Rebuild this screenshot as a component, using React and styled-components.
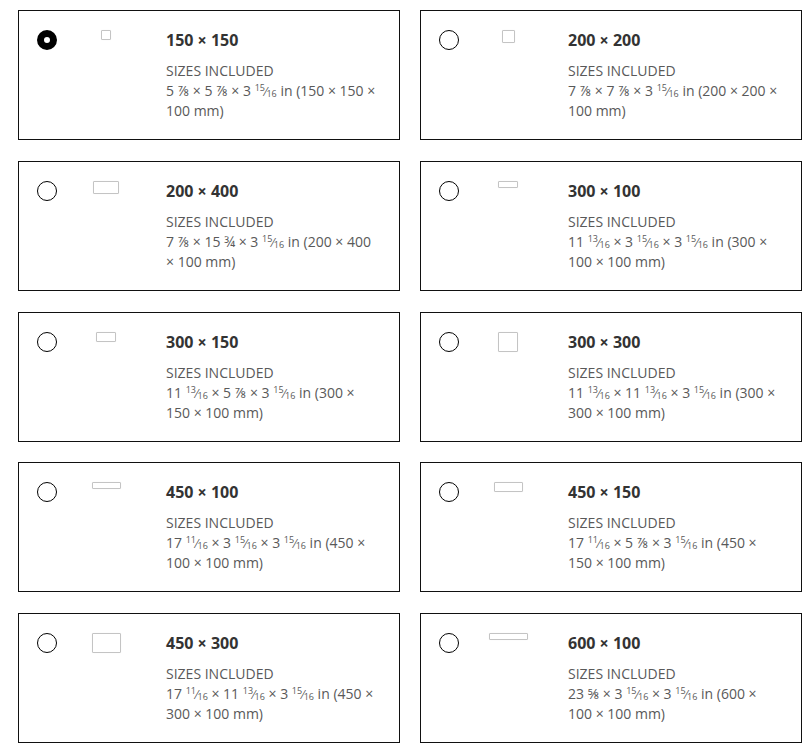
import React from 'react'
import styled, { createGlobalStyle } from 'styled-components'

const GlobalStyle = createGlobalStyle`
  body {
    margin: 0;
    background: #fff;
    font-family: "Open Sans", "Noto Sans", sans-serif;
  }
`

const sizes = [
  { w: 150, h: 150, inches: ['5', '7/8-', '5', '7/8-', '3', '15/16'], mm: '(150 × 150 × 100 mm)', selected: true },
  { w: 200, h: 200, inches: ['7', '7/8-', '7', '7/8-', '3', '15/16'], mm: '(200 × 200 × 100 mm)' },
  { w: 400, h: 200, title: '200 × 400', inches: ['7', '7/8-', '15', '3/4-', '3', '15/16'], mm: '(200 × 400 × 100 mm)' },
  { w: 300, h: 100, inches: ['11', '13/16', '3', '15/16', '3', '15/16'], mm: '(300 × 100 × 100 mm)' },
  { w: 300, h: 150, inches: ['11', '13/16', '5', '7/8-', '3', '15/16'], mm: '(300 × 150 × 100 mm)' },
  { w: 300, h: 300, inches: ['11', '13/16', '11', '13/16', '3', '15/16'], mm: '(300 × 300 × 100 mm)' },
  { w: 450, h: 100, inches: ['17', '11/16', '3', '15/16', '3', '15/16'], mm: '(450 × 100 × 100 mm)' },
  { w: 450, h: 150, inches: ['17', '11/16', '5', '7/8-', '3', '15/16'], mm: '(450 × 150 × 100 mm)' },
  { w: 450, h: 300, inches: ['17', '11/16', '11', '13/16', '3', '15/16'], mm: '(450 × 300 × 100 mm)' },
  { w: 600, h: 100, inches: ['23', '5/8-', '3', '15/16', '3', '15/16'], mm: '(600 × 100 × 100 mm)' },
]

const glyphs = { '7/8-': '⅞', '3/4-': '¾', '5/8-': '⅝' }

const Page = styled.div`
  display: grid;
  grid-template-columns: 382px 382px;
  column-gap: 20px;
  row-gap: 20.75px;
  padding: 10px 0 0 18px;
`

const Card = styled.label`
  display: flex;
  align-items: flex-start;
  border: 1px solid #111;
  padding: 19px 21px 18px 18px;
  height: 130px;
  box-sizing: border-box;
  cursor: pointer;
`

const Radio = styled.span`
  flex: none;
  width: 20px;
  height: 20px;
  border-radius: 50%;
  box-sizing: border-box;
  border: ${p => (p.$on ? '7px solid #000' : '1px solid #000')};
  background: #fff;
`

const ThumbCol = styled.div`
  flex: none;
  width: 48px;
  margin-left: 25px;
  display: flex;
  justify-content: center;
`

const Thumb = styled.div`
  box-sizing: border-box;
  border: 1px solid #c4c4c4;
  border-radius: 1px;
  background: #fff;
  box-shadow: 0 0 1px rgba(0, 0, 0, 0.08);
`

const Info = styled.div`
  margin-left: 36px;
  flex: 1;
  color: #595959;
  font-size: 14px;
  line-height: 20px;
`

const Title = styled.div`
  font-size: 16px;
  font-weight: 700;
  line-height: 20px;
  color: #333;
  margin-bottom: 11px;
`

const Num = styled.span`
  font-size: 9px;
  vertical-align: ${p => (p.$down ? '-1px' : '5px')};
  line-height: 0;
`

const Slash = styled.span`
  font-size: 12px;
  line-height: 0;
`

function Part({ whole, frac }) {
  if (glyphs[frac]) return <>{whole} {glyphs[frac]}</>
  const [n, d] = frac.split('/')
  return (
    <>
      {whole} <Num>{n}</Num><Slash>⁄</Slash><Num $down>{d}</Num>
    </>
  )
}

const SCALE = 0.065

export default function App() {
  return (
    <>
      <GlobalStyle />
      <Page>
        {sizes.map((s, i) => {
          const title = s.title || `${s.w} × ${s.h}`
          const tw = Math.round(s.w * SCALE)
          const th = Math.round(s.h * SCALE)
          return (
            <Card key={i}>
              <Radio $on={s.selected} />
              <ThumbCol>
                <Thumb style={{ width: tw, height: th }} />
              </ThumbCol>
              <Info>
                <Title>{title}</Title>
                <div>SIZES INCLUDED</div>
                <div>
                  <Part whole={s.inches[0]} frac={s.inches[1]} /> ×{' '}
                  <Part whole={s.inches[2]} frac={s.inches[3]} /> ×{' '}
                  <Part whole={s.inches[4]} frac={s.inches[5]} /> in {s.mm}
                </div>
              </Info>
            </Card>
          )
        })}
      </Page>
    </>
  )
}
